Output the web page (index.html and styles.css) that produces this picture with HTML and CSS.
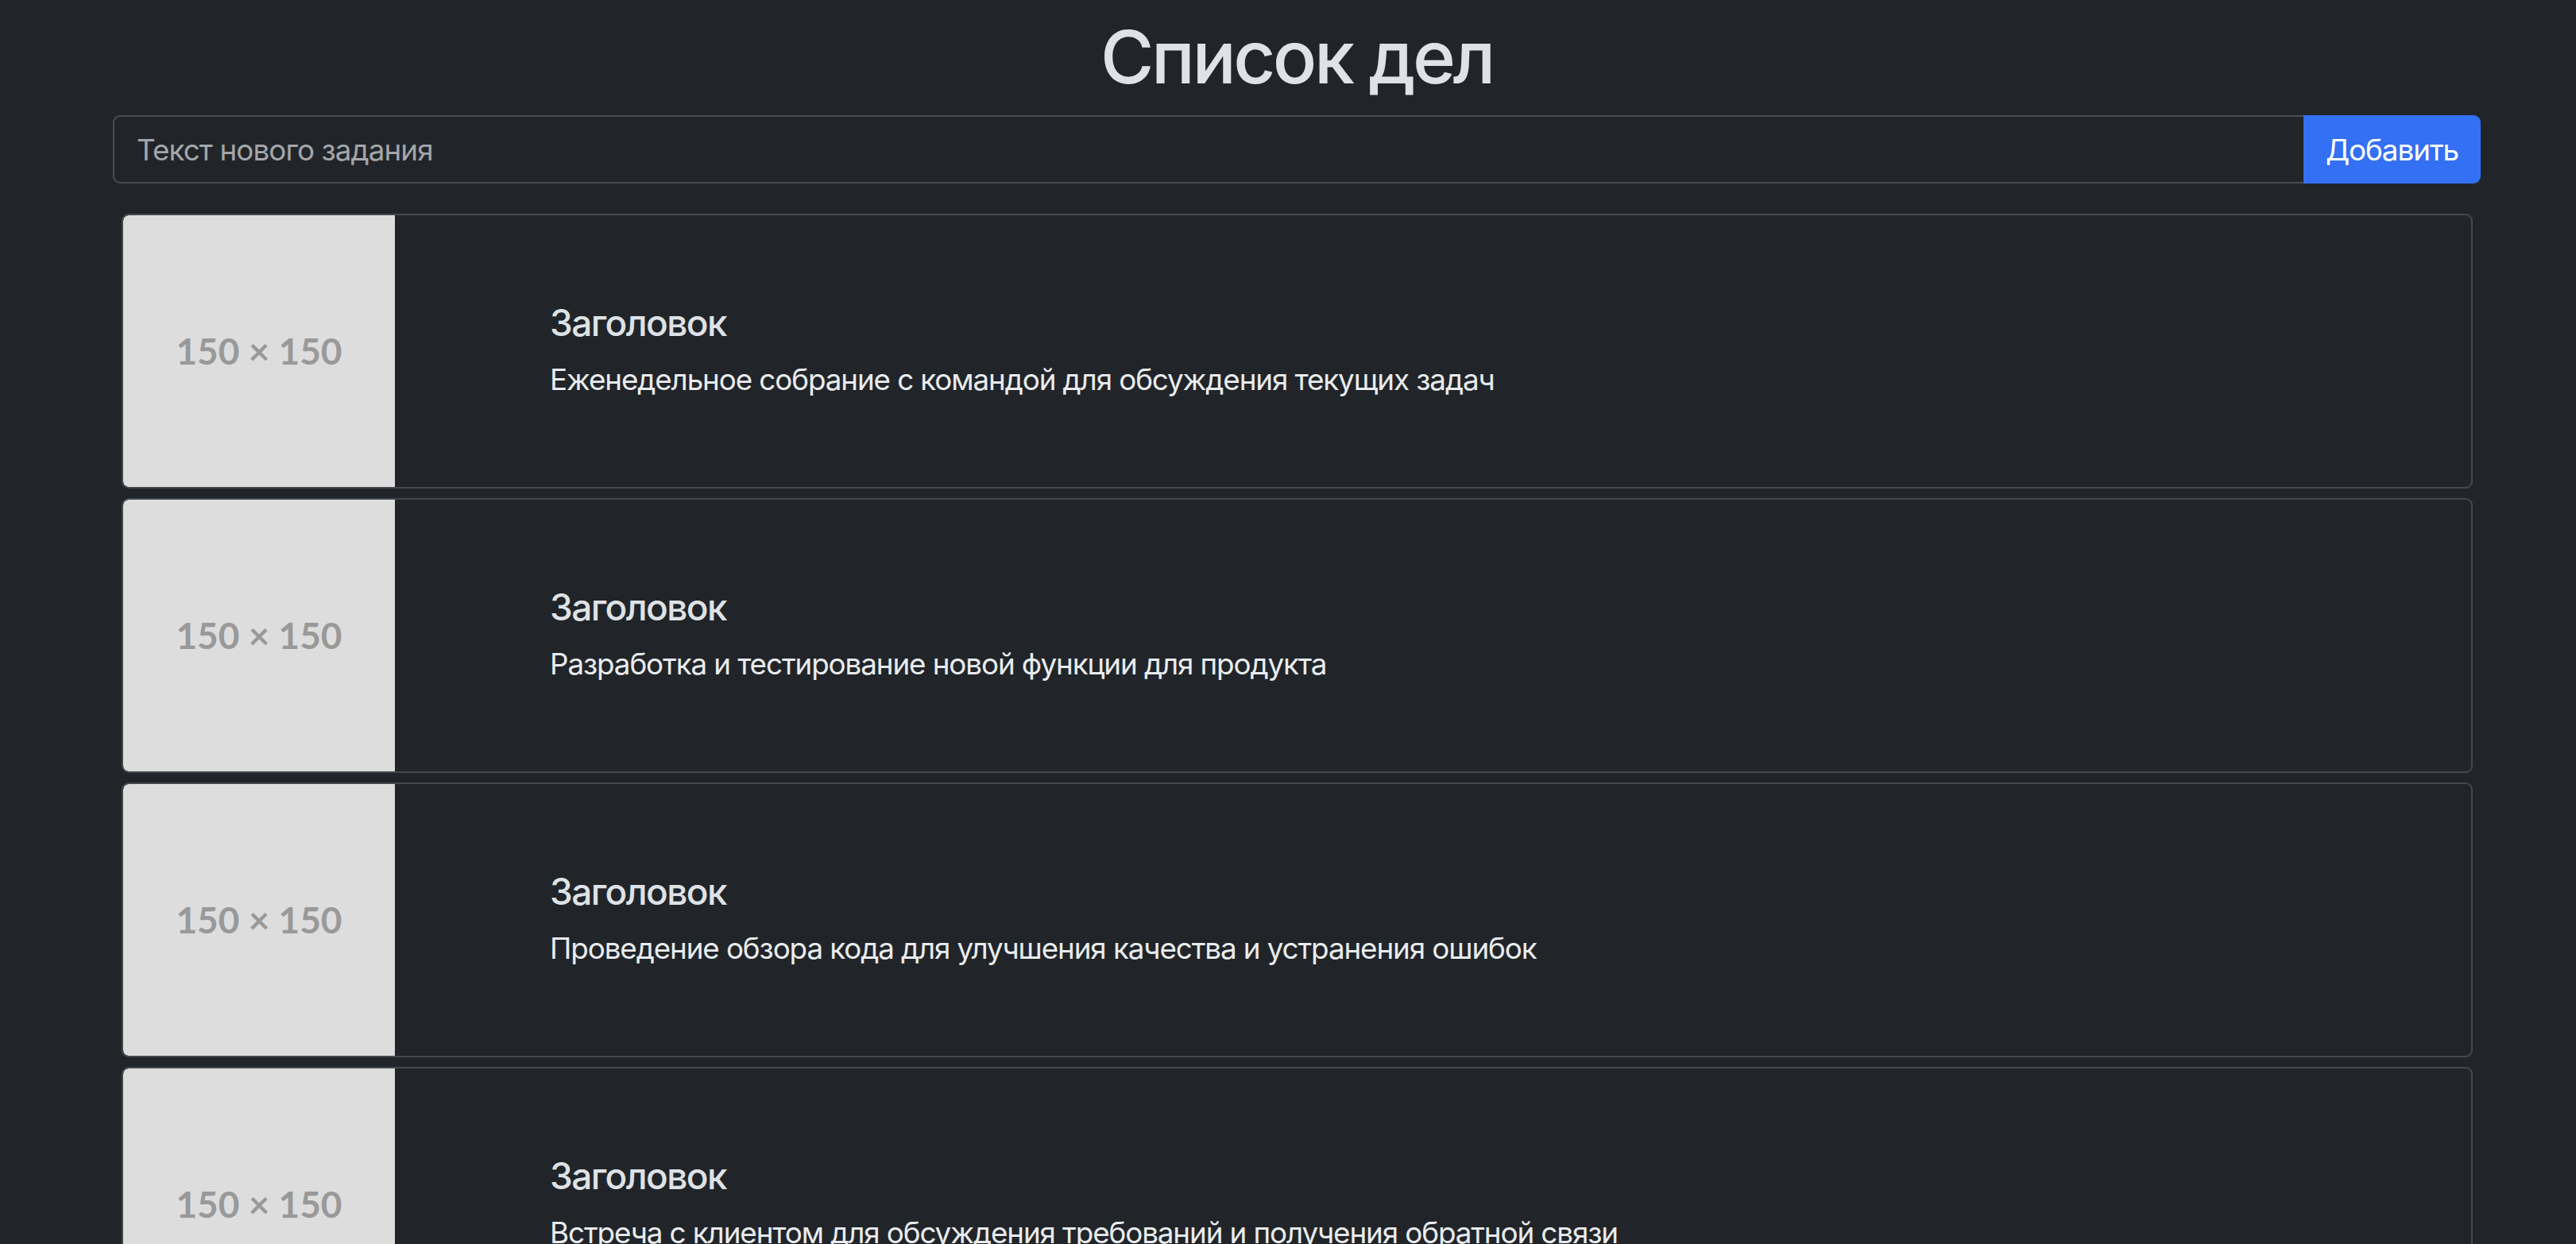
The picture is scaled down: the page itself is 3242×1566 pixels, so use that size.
FILE: index.html
```html
<!DOCTYPE html>
<html lang="ru">
<head>
<meta charset="utf-8">
<title>Список дел</title>
<link rel="stylesheet" href="styles.css">
</head>
<body>
<div class="page">
  <h1 class="page-title">Список дел</h1>
  <form class="add-form">
    <input class="add-input" type="text" placeholder="Текст нового задания">
    <button class="add-btn" type="button">Добавить</button>
  </form>
  <ul class="task-list">
    <li class="task-card">
      <div class="thumb">150 × 150</div>
      <div class="task-body">
        <h5 class="task-title">Заголовок</h5>
        <p class="task-text">Еженедельное собрание с командой для обсуждения текущих задач</p>
      </div>
    </li>
    <li class="task-card">
      <div class="thumb">150 × 150</div>
      <div class="task-body">
        <h5 class="task-title">Заголовок</h5>
        <p class="task-text">Разработка и тестирование новой функции для продукта</p>
      </div>
    </li>
    <li class="task-card">
      <div class="thumb">150 × 150</div>
      <div class="task-body">
        <h5 class="task-title">Заголовок</h5>
        <p class="task-text">Проведение обзора кода для улучшения качества и устранения ошибок</p>
      </div>
    </li>
    <li class="task-card">
      <div class="thumb">150 × 150</div>
      <div class="task-body">
        <h5 class="task-title">Заголовок</h5>
        <p class="task-text">Встреча с клиентом для обсуждения требований и получения обратной связи</p>
      </div>
    </li>
  </ul>
</div>
</body>
</html>
```
FILE: styles.css
```css
html, body {
  margin: 0;
  padding: 0;
  background: #212529;
}
body {
  color: #dee2e6;
  font-family: Inter, "Noto Sans", "Liberation Sans", sans-serif;
  font-size: 36.8px;
  line-height: 1.5;
  letter-spacing: -0.03em;
}
.page {
  width: 2980px;
  margin-left: 142px;
}
.page-title {
  margin: 17px 0 18px;
  text-align: center;
  font-size: 92px;
  font-weight: 500;
  line-height: 1.2;
  letter-spacing: -0.038em;
  color: #dee2e6;
}
.add-form {
  display: flex;
  height: 86px;
  margin: 0;
}
.add-input {
  flex: 1;
  box-sizing: border-box;
  height: 86px;
  margin: 0;
  padding: 0 28px;
  background: #212529;
  color: #dee2e6;
  border: 2px solid #4a4e54;
  border-right: none;
  border-radius: 9px 0 0 9px;
  font-family: inherit;
  font-size: 36.8px;
  letter-spacing: -0.025em;
  outline: none;
}
.add-input::placeholder {
  color: #a3a6aa;
}
.add-btn {
  box-sizing: border-box;
  width: 223px;
  height: 86px;
  margin: 0;
  padding: 0;
  background: #3370f4;
  color: #ffffff;
  border: none;
  border-radius: 0 9px 9px 0;
  font-family: inherit;
  font-size: 36.8px;
  letter-spacing: -0.028em;
  cursor: pointer;
}
.task-list {
  list-style: none;
  margin: 38px 10px 0 11px;
  padding: 0;
  display: flex;
  flex-direction: column;
  gap: 12px;
}
.task-card {
  display: flex;
  box-sizing: border-box;
  height: 346px;
  border: 2px solid #45494e;
  border-radius: 9px;
  overflow: hidden;
  background: #212529;
}
.thumb {
  flex: none;
  width: 342px;
  height: 342px;
  display: flex;
  align-items: center;
  justify-content: center;
  background: #dddddd;
  color: #999999;
  font-family: Lato, "Noto Sans", sans-serif;
  font-weight: 700;
  font-size: 46px;
  line-height: 1;
  letter-spacing: 0;
  border-radius: 7px 0 0 7px;
}
.task-body {
  padding: 108px 0 0 195px;
}
.task-title {
  margin: 0 0 15px;
  font-size: 46px;
  font-weight: 500;
  line-height: 1.2;
  letter-spacing: -0.035em;
  color: #dee2e6;
}
.task-text {
  margin: 0;
  font-size: 36.8px;
  line-height: 1.5;
  color: #e9ecef;
}
```
